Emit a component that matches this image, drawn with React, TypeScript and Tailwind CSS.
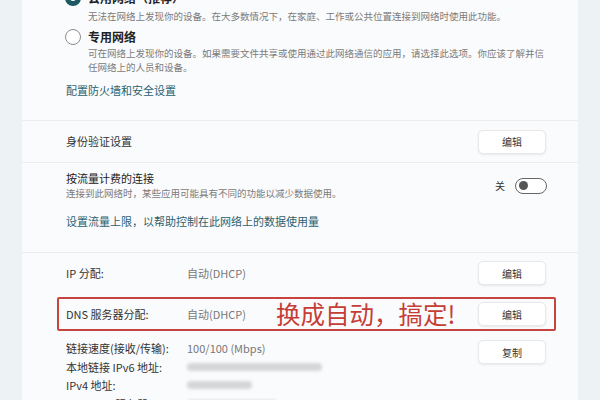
import React from "react";

const font = { fontFamily: '"Noto Sans CJK SC", "Noto Sans", sans-serif' };

const EditButton = ({ label = "编辑" }: { label?: string }) => (
    <button className="flex h-[24px] w-[68px] items-center justify-center rounded-[5px] border border-[#e6e8ea] bg-white text-[10px] text-[#333] shadow-[0_1px_2px_rgba(0,0,0,0.08)]">
        {label}
    </button>
);

const Blur = ({ w }: { w: number }) => (
    <div className="flex h-[14px] items-center">
        <div className="h-[8px] rounded-sm bg-[#d4d6d8] blur-[1.5px]" style={{ width: w }} />
    </div>
);

export default function App() {
    return (
        <div className="h-[400px] w-[600px] overflow-hidden bg-[#edf2f4]" style={font}>
            <div className="ml-[22px] w-[556px] bg-[#fafbfc]">
                {/* network profile */}
                <div className="-mt-[10px] flex h-[130px] flex-col pl-[43px]">
                    <div className="flex gap-[7px]">
                        <div className="h-[16px] w-[16px] shrink-0 rounded-full border-[5px] border-[#1d5963] bg-white" />
                        <div className="flex flex-col">
                            <div className="h-[16px] text-[12px] font-semibold leading-[16px] text-[#222]">公用网络（推荐）</div>
                            <div className="mt-[3px] text-[9.5px] leading-[14px] text-[#7a7a7a]">
                                无法在网络上发现你的设备。在大多数情况下，在家庭、工作或公共位置连接到网络时使用此功能。
                            </div>
                        </div>
                    </div>
                    <div className="mt-[6px] flex gap-[7px]">
                        <div className="h-[16px] w-[16px] shrink-0 rounded-full border border-[#8c8c8c] bg-white" />
                        <div className="flex flex-col">
                            <div className="h-[16px] text-[12px] font-semibold leading-[16px] text-[#222]">专用网络</div>
                            <div className="mt-px w-[458px] text-[9.5px] leading-[14px] text-[#7a7a7a]">
                                可在网络上发现你的设备。如果需要文件共享或使用通过此网络通信的应用，请选择此选项。你应该了解并信任网络上的人员和设备。
                            </div>
                        </div>
                    </div>
                    <div className="ml-[1px] mt-[9px] text-[11px] leading-[14px] text-[#2b6270]">配置防火墙和安全设置</div>
                </div>

                {/* auth */}
                <div className="flex h-[42px] items-center justify-between border-t border-[#eaedef] pl-[44px] pr-[32px]">
                    <span className="text-[11px] text-[#333]">身份验证设置</span>
                    <EditButton />
                </div>

                {/* metered */}
                <div className="flex h-[90px] flex-col border-t border-[#eaedef] pl-[44px] pr-[31px] pt-[8px]">
                    <div className="flex items-center justify-between">
                        <div className="flex flex-col">
                            <span className="text-[11px] leading-[15px] text-[#222]">按流量计费的连接</span>
                            <span className="text-[9.5px] leading-[14px] text-[#7a7a7a]">
                                连接到此网络时，某些应用可能具有不同的功能以减少数据使用。
                            </span>
                        </div>
                        <div className="flex items-center gap-[10px]">
                            <span className="text-[10px] text-[#333]">关</span>
                            <div className="flex h-[16px] w-[32px] items-center rounded-full border border-[#666] bg-white px-[3px]">
                                <div className="h-[9px] w-[9px] rounded-full bg-[#555]" />
                            </div>
                        </div>
                    </div>
                    <div className="mt-[14px] text-[11px] leading-[14px] text-[#2b6270]">
                        设置流量上限，以帮助控制在此网络上的数据使用量
                    </div>
                </div>

                {/* ip settings */}
                <div className="flex flex-col border-t border-[#eaedef] pl-[44px] pr-[32px] pt-[9px]">
                    <div className="flex h-[22px] items-center justify-between">
                        <div className="flex text-[11px]">
                            <span className="w-[121px] text-[#333]">IP 分配:</span>
                            <span className="text-[#777]">自动(DHCP)</span>
                        </div>
                        <EditButton />
                    </div>
                    <div className="-ml-[9px] -mr-[10px] mt-[13px] flex h-[34px] items-center justify-between rounded-[2px] border-2 border-[#c7453e] pl-[7px] pr-[8px]">
                        <div className="flex items-center text-[11px]">
                            <span className="w-[121px] text-[#333]">DNS 服务器分配:</span>
                            <span className="w-[89px] text-[#777]">自动(DHCP)</span>
                            <span className="text-[24.5px] leading-[28px] text-[#c63d36]">换成自动，搞定!</span>
                        </div>
                        <EditButton />
                    </div>
                    <div className="mt-[8px] flex justify-between">
                        <div className="flex flex-col text-[11px] leading-[18.5px]">
                            <div className="flex">
                                <span className="w-[121px] text-[#333]">链接速度(接收/传输):</span>
                                <span className="text-[#777]">100/100 (Mbps)</span>
                            </div>
                            <div className="flex items-center">
                                <span className="w-[121px] text-[#333]">本地链接 IPv6 地址:</span>
                                <Blur w={135} />
                            </div>
                            <div className="flex items-center">
                                <span className="w-[121px] text-[#333]">IPv4 地址:</span>
                                <Blur w={65} />
                            </div>
                            <div className="flex items-center">
                                <span className="w-[121px] text-[#333]">IPv4 DNS 服务器:</span>
                                <Blur w={90} />
                            </div>
                        </div>
                        <div className="pt-[1px]">
                            <EditButton label="复制" />
                        </div>
                    </div>
                </div>
            </div>
        </div>
    );
}
